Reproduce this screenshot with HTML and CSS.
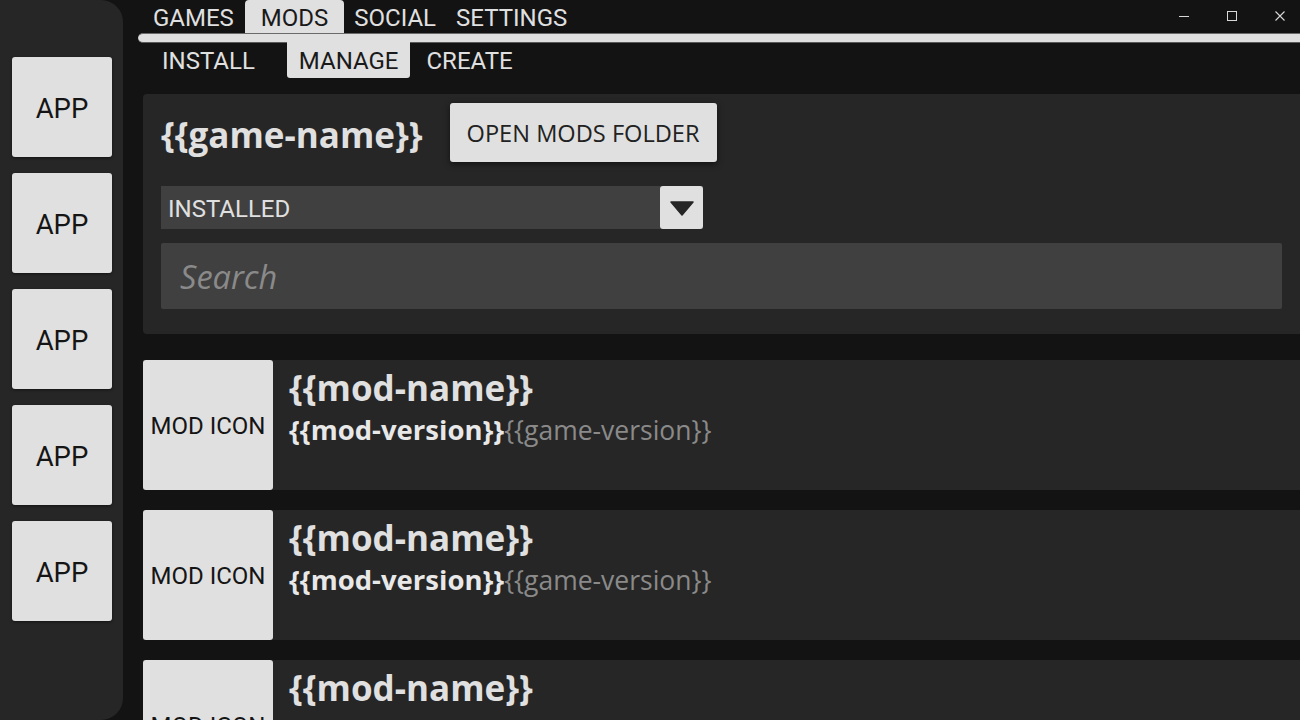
FILE: index.html
```html
<!DOCTYPE html>
<html>
<head>
<meta charset="utf-8">
<link rel="stylesheet" href="styles.css">
</head>
<body>
<aside class="sidebar">
  <div class="app">APP</div>
  <div class="app">APP</div>
  <div class="app">APP</div>
  <div class="app">APP</div>
  <div class="app">APP</div>
</aside>
<main class="main">
  <header class="topbar">
    <nav class="tabs">
      <div class="tab">GAMES</div>
      <div class="tab active">MODS</div>
      <div class="tab">SOCIAL</div>
      <div class="tab">SETTINGS</div>
    </nav>
    <div class="winctl">
      <div class="wbtn"><svg width="12" height="12" viewBox="0 0 12 12"><path d="M1 6.5H11" stroke="#d8d8d8" stroke-width="1"/></svg></div>
      <div class="wbtn"><svg width="12" height="12" viewBox="0 0 12 12"><rect x="1.5" y="1.5" width="9" height="9" fill="none" stroke="#d8d8d8" stroke-width="1"/></svg></div>
      <div class="wbtn"><svg width="12" height="12" viewBox="0 0 12 12"><path d="M1.5 1.5L10.5 10.5M10.5 1.5L1.5 10.5" stroke="#d8d8d8" stroke-width="1.1"/></svg></div>
    </div>
  </header>
  <div class="bar"></div>
  <nav class="subtabs">
    <div class="subtab">INSTALL</div>
    <div class="subtab active">MANAGE</div>
    <div class="subtab">CREATE</div>
  </nav>
  <section class="panel">
    <div class="title-row">
      <h1 class="game-name">{{game-name}}</h1>
      <button class="btn">OPEN MODS FOLDER</button>
    </div>
    <div class="select">
      <span class="select-text">INSTALLED</span>
      <span class="select-arrow"><svg width="24" height="15" viewBox="0 0 24 15"><path d="M1 1H23L12 14Z" fill="#262626" stroke="#262626" stroke-width="1.5" stroke-linejoin="round"/></svg></span>
    </div>
    <div class="search">Search</div>
  </section>
  <div class="mods">
    <div class="mod">
      <div class="mod-icon">MOD ICON</div>
      <div class="mod-info">
        <div class="mod-name">{{mod-name}}</div>
        <div class="mod-ver"><b>{{mod-version}}</b><span class="gv">{{game-version}}</span></div>
      </div>
    </div>
    <div class="mod">
      <div class="mod-icon">MOD ICON</div>
      <div class="mod-info">
        <div class="mod-name">{{mod-name}}</div>
        <div class="mod-ver"><b>{{mod-version}}</b><span class="gv">{{game-version}}</span></div>
      </div>
    </div>
    <div class="mod">
      <div class="mod-icon">MOD ICON</div>
      <div class="mod-info">
        <div class="mod-name">{{mod-name}}</div>
        <div class="mod-ver"><b>{{mod-version}}</b><span class="gv">{{game-version}}</span></div>
      </div>
    </div>
  </div>
</main>
</body>
</html>
```
FILE: styles.css
```css
* { box-sizing: border-box; }
html, body { margin: 0; padding: 0; }
body {
  width: 1300px;
  height: 720px;
  overflow: hidden;
  background: #131313;
  display: flex;
  font-family: Roboto, "Liberation Sans", sans-serif;
  color: #e0e0e0;
}
.sidebar {
  width: 123px;
  height: 720px;
  flex: none;
  background: #262626;
  border-radius: 0 22px 22px 0;
  padding: 57px 0 0 12px;
  display: flex;
  flex-direction: column;
  gap: 16px;
}
.app {
  width: 100px;
  height: 100px;
  flex: none;
  background: #e0e0e0;
  border-radius: 3px;
  box-shadow: 0 1px 3px rgba(0,0,0,0.5);
  color: #151515;
  font-size: 27.5px;
  display: flex;
  align-items: center;
  justify-content: center;
  padding-top: 3px;
}
.main {
  flex: 1;
  margin-left: 15px;
  height: 720px;
  overflow: hidden;
  display: flex;
  flex-direction: column;
}
.main > * { flex: none; }
.topbar {
  height: 33px;
  display: flex;
  justify-content: space-between;
}
.tabs { display: flex; padding-left: 5px; }
.tab {
  font-size: 24px;
  line-height: 33px;
  padding: 2px 10px 0;
  color: #e0e0e0;
}
.tab:first-child { padding-right: 11px; }
.tab.active {
  background: #e0e0e0;
  color: #1a1a1a;
  padding: 2px 16px 0;
  border-radius: 4px 4px 0 0;
}
.winctl { display: flex; gap: 8px; }
.wbtn {
  width: 40px;
  height: 33px;
  display: flex;
  align-items: center;
  justify-content: center;
  padding-bottom: 2px;
}
.bar {
  height: 10px;
  background: #e0e0e0;
  border-top: 1px solid #6a6a6a;
  border-bottom: 1px solid #5a5a5a;
  border-radius: 5px 0 0 5px;
}
.subtabs {
  display: flex;
  height: 35px;
  padding-left: 12px;
}
.subtab {
  font-size: 24px;
  line-height: 35px;
  padding: 1px 12px 0;
  margin-right: 8px;
}
.subtab:first-child { margin-right: 20px; }
.subtab.active {
  background: #e0e0e0;
  color: #1a1a1a;
  border-radius: 0 0 3px 3px;
  margin-right: 4px;
  margin-top: -1px;
  height: 36px;
  padding-top: 2px;
}
.panel {
  margin: 16px 0 0 5px;
  background: #262626;
  border-radius: 4px 0 0 4px;
  padding: 9px 18px 25px 18px;
  display: flex;
  flex-direction: column;
}
.title-row {
  display: flex;
  align-items: center;
  height: 59px;
  gap: 27px;
}
.game-name {
  margin: 0;
  font-family: "Open Sans", "Noto Sans", sans-serif;
  font-weight: 700;
  font-size: 35px;
  color: #e0e0e0;
  padding-top: 4px;
}
.btn {
  height: 59px;
  border: none;
  background: #e0e0e0;
  border-radius: 3px;
  box-shadow: 0 2px 6px rgba(0,0,0,0.55);
  font-family: "Open Sans", "Noto Sans", sans-serif;
  font-size: 23.6px;
  color: #222;
  padding: 0 17px;
}
.select {
  margin-top: 24px;
  width: 542px;
  height: 43px;
  background: #404040;
  display: flex;
  align-items: center;
  justify-content: space-between;
}
.select-text {
  font-size: 24px;
  padding: 2px 0 0 7px;
  color: #e0e0e0;
}
.select-arrow {
  width: 43px;
  height: 43px;
  background: #e0e0e0;
  border-radius: 3px;
  display: flex;
  align-items: center;
  justify-content: center;
  padding-top: 2px;
}
.search {
  margin-top: 14px;
  height: 66px;
  background: #404040;
  border-radius: 2px;
  font-family: "Open Sans", "Noto Sans", sans-serif;
  font-style: italic;
  font-size: 32.5px;
  color: #8a8a8a;
  padding-left: 19px;
  display: flex;
  align-items: center;
}
.mods {
  margin: 26px 0 0 5px;
  display: flex;
  flex-direction: column;
  gap: 20px;
}
.mod {
  height: 130px;
  flex: none;
  background: #262626;
  display: flex;
}
.mod-icon {
  width: 130px;
  height: 130px;
  flex: none;
  background: #e0e0e0;
  border-radius: 3px;
  color: #151515;
  font-size: 24px;
  display: flex;
  align-items: center;
  justify-content: center;
  padding-top: 2px;
}
.mod-info {
  padding: 4px 0 0 16px;
  font-family: "Open Sans", "Noto Sans", sans-serif;
}
.mod-name {
  font-weight: 700;
  font-size: 35px;
  line-height: 48px;
  color: #e0e0e0;
}
.mod-ver {
  line-height: 36px;
}
.mod-ver b { color: #e8e8e8; font-weight: 700; font-size: 27.5px; }
.gv { color: #8a8a8a; font-size: 26.5px; }
```
